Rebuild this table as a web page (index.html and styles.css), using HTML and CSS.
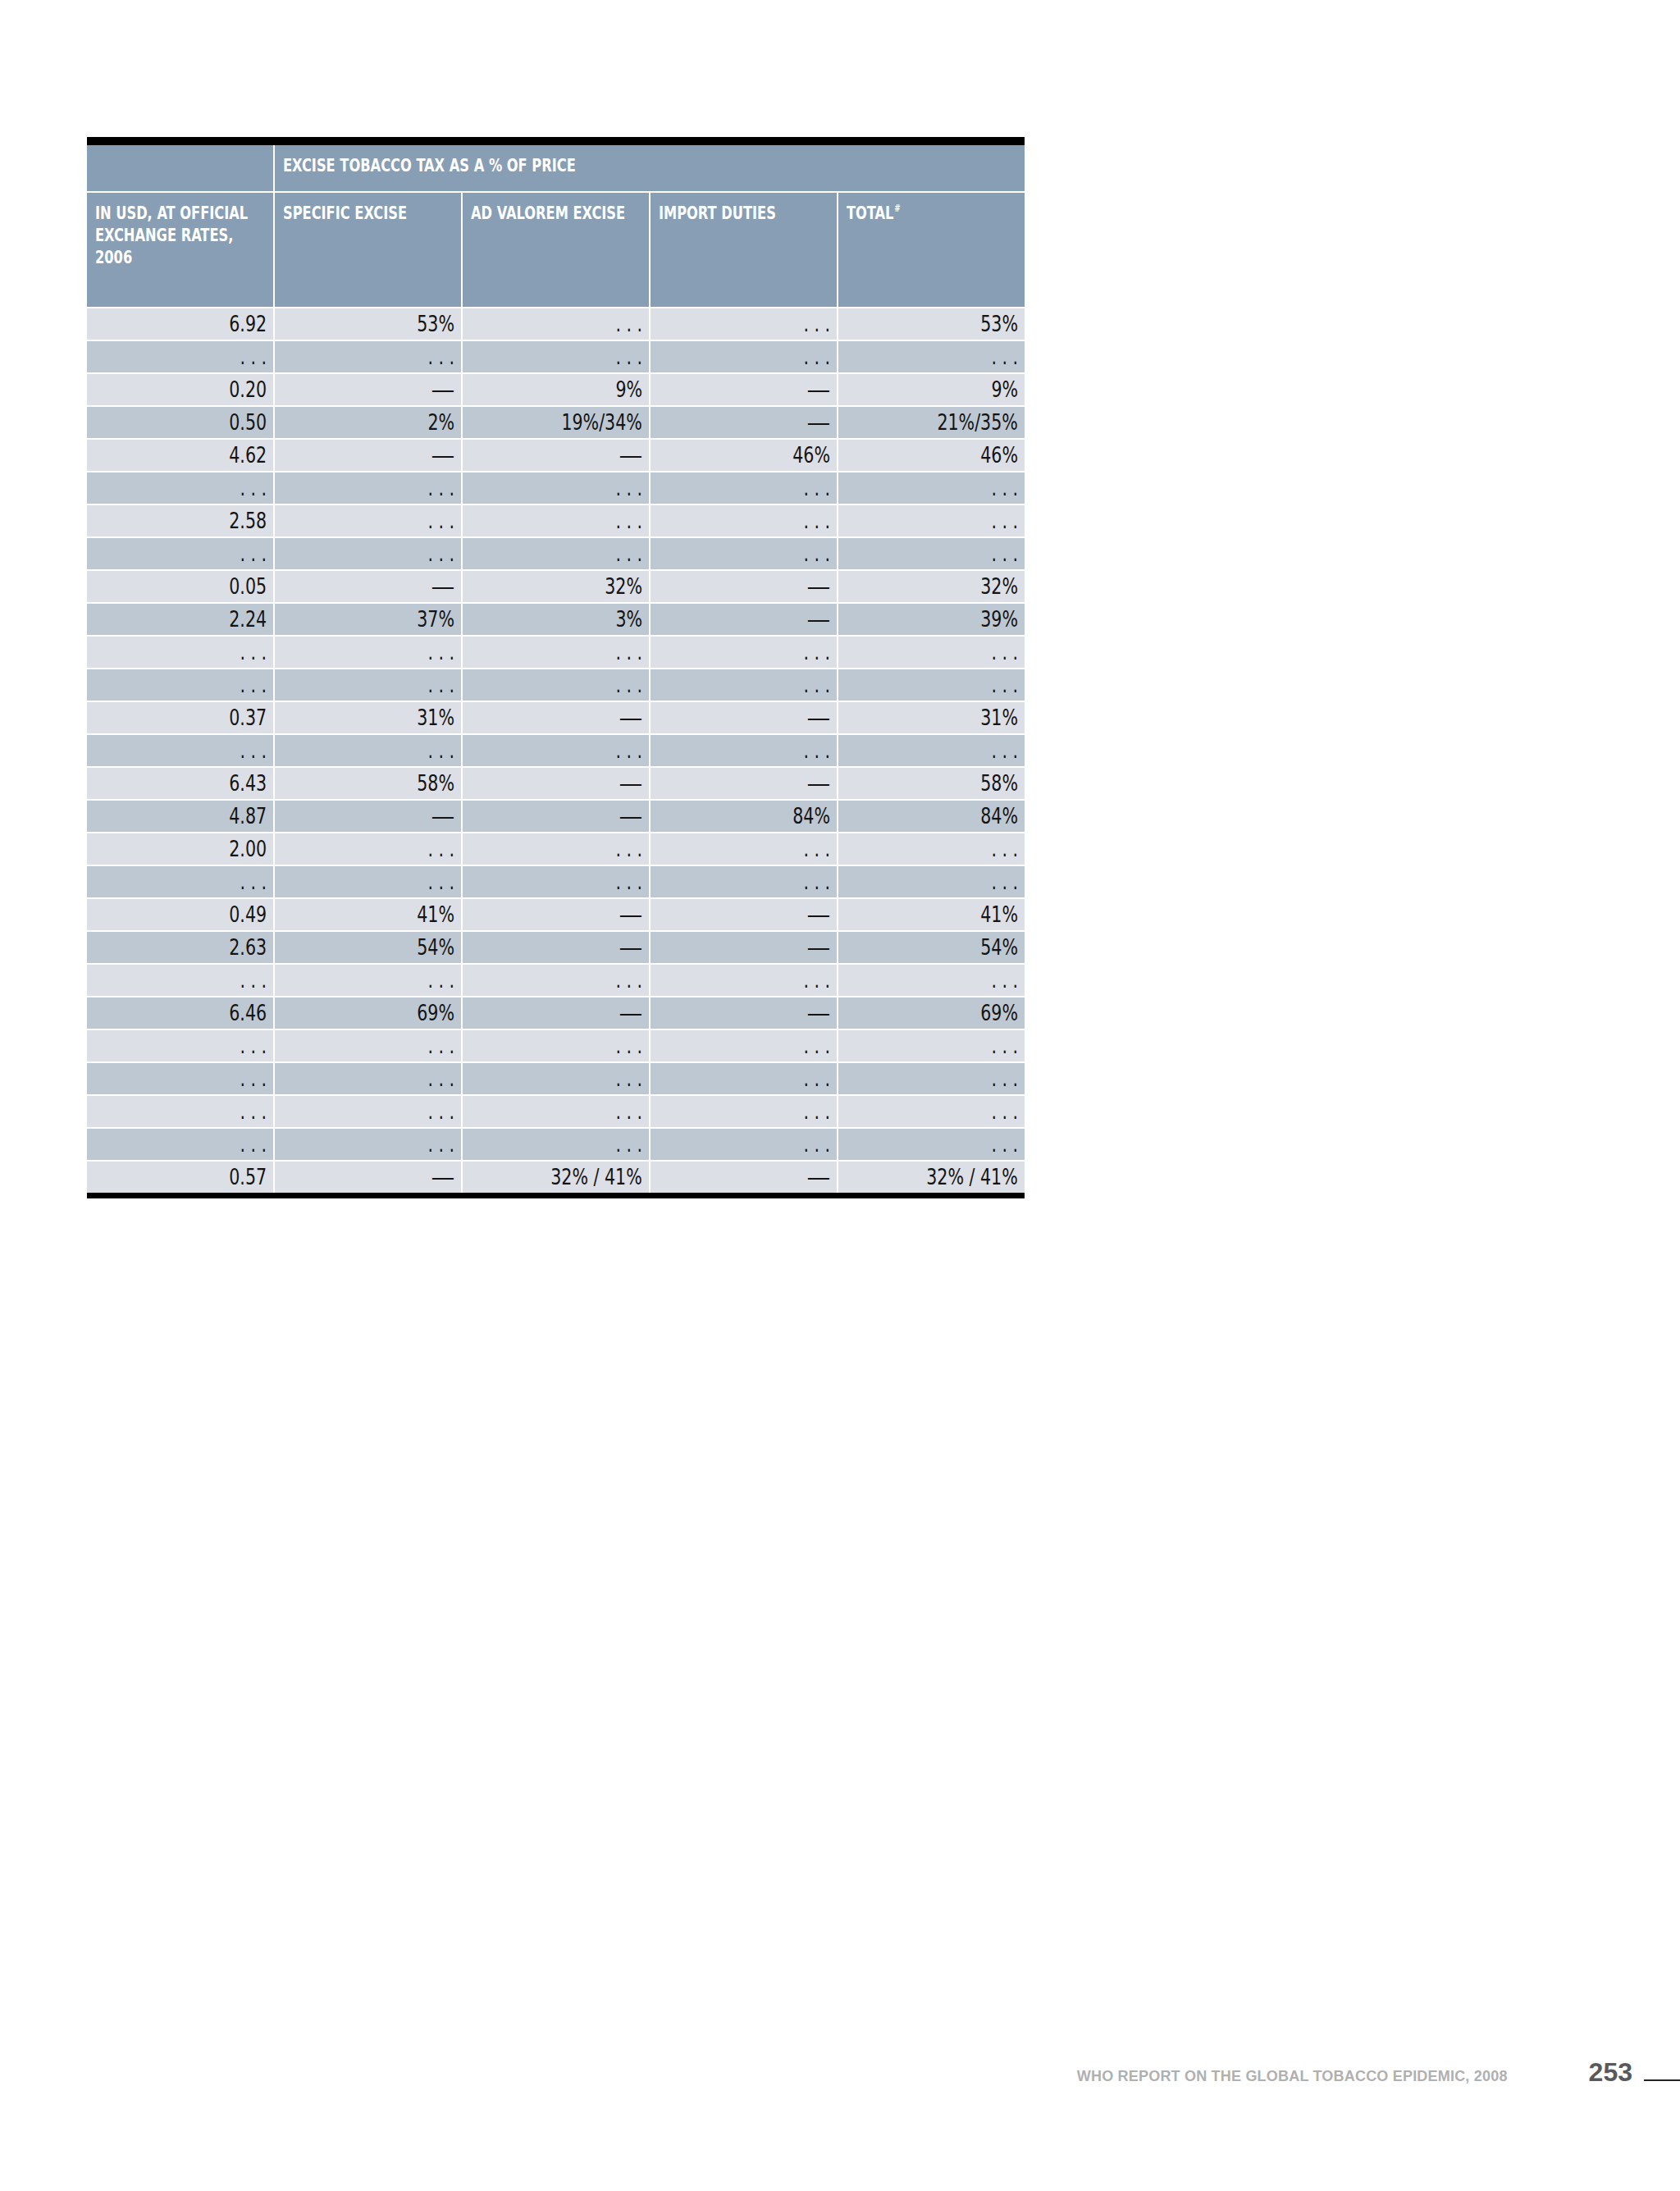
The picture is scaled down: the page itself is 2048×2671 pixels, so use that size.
FILE: index.html
```html
<!DOCTYPE html>
<html lang="en">
<head>
<meta charset="utf-8">
<title>Excise tobacco tax table</title>
<link rel="stylesheet" href="styles.css">
</head>
<body>
<div class="page">
  <div class="tbl">
    <div class="h h1"></div>
    <div class="h h1 span4"><span class="ht">EXCISE TOBACCO TAX AS A % OF PRICE</span></div>
    <div class="h h2"><span class="ht">IN USD, AT OFFICIAL<br>EXCHANGE RATES,<br>2006</span></div>
    <div class="h h2"><span class="ht">SPECIFIC EXCISE</span></div>
    <div class="h h2"><span class="ht">AD VALOREM EXCISE</span></div>
    <div class="h h2"><span class="ht">IMPORT DUTIES</span></div>
    <div class="h h2"><span class="ht">TOTAL<sup>#</sup></span></div>

    <div class="row"><div class="c"><span class="v">6.92</span></div><div class="c"><span class="v">53%</span></div><div class="c"><span class="v">. . .</span></div><div class="c"><span class="v">. . .</span></div><div class="c"><span class="v">53%</span></div></div>
    <div class="row alt"><div class="c"><span class="v">. . .</span></div><div class="c"><span class="v">. . .</span></div><div class="c"><span class="v">. . .</span></div><div class="c"><span class="v">. . .</span></div><div class="c"><span class="v">. . .</span></div></div>
    <div class="row"><div class="c"><span class="v">0.20</span></div><div class="c"><span class="v"><span class="dash">—</span></span></div><div class="c"><span class="v">9%</span></div><div class="c"><span class="v"><span class="dash">—</span></span></div><div class="c"><span class="v">9%</span></div></div>
    <div class="row alt"><div class="c"><span class="v">0.50</span></div><div class="c"><span class="v">2%</span></div><div class="c"><span class="v">19%/34%</span></div><div class="c"><span class="v"><span class="dash">—</span></span></div><div class="c"><span class="v">21%/35%</span></div></div>
    <div class="row"><div class="c"><span class="v">4.62</span></div><div class="c"><span class="v"><span class="dash">—</span></span></div><div class="c"><span class="v"><span class="dash">—</span></span></div><div class="c"><span class="v">46%</span></div><div class="c"><span class="v">46%</span></div></div>
    <div class="row alt"><div class="c"><span class="v">. . .</span></div><div class="c"><span class="v">. . .</span></div><div class="c"><span class="v">. . .</span></div><div class="c"><span class="v">. . .</span></div><div class="c"><span class="v">. . .</span></div></div>
    <div class="row"><div class="c"><span class="v">2.58</span></div><div class="c"><span class="v">. . .</span></div><div class="c"><span class="v">. . .</span></div><div class="c"><span class="v">. . .</span></div><div class="c"><span class="v">. . .</span></div></div>
    <div class="row alt"><div class="c"><span class="v">. . .</span></div><div class="c"><span class="v">. . .</span></div><div class="c"><span class="v">. . .</span></div><div class="c"><span class="v">. . .</span></div><div class="c"><span class="v">. . .</span></div></div>
    <div class="row"><div class="c"><span class="v">0.05</span></div><div class="c"><span class="v"><span class="dash">—</span></span></div><div class="c"><span class="v">32%</span></div><div class="c"><span class="v"><span class="dash">—</span></span></div><div class="c"><span class="v">32%</span></div></div>
    <div class="row alt"><div class="c"><span class="v">2.24</span></div><div class="c"><span class="v">37%</span></div><div class="c"><span class="v">3%</span></div><div class="c"><span class="v"><span class="dash">—</span></span></div><div class="c"><span class="v">39%</span></div></div>
    <div class="row"><div class="c"><span class="v">. . .</span></div><div class="c"><span class="v">. . .</span></div><div class="c"><span class="v">. . .</span></div><div class="c"><span class="v">. . .</span></div><div class="c"><span class="v">. . .</span></div></div>
    <div class="row alt"><div class="c"><span class="v">. . .</span></div><div class="c"><span class="v">. . .</span></div><div class="c"><span class="v">. . .</span></div><div class="c"><span class="v">. . .</span></div><div class="c"><span class="v">. . .</span></div></div>
    <div class="row"><div class="c"><span class="v">0.37</span></div><div class="c"><span class="v">31%</span></div><div class="c"><span class="v"><span class="dash">—</span></span></div><div class="c"><span class="v"><span class="dash">—</span></span></div><div class="c"><span class="v">31%</span></div></div>
    <div class="row alt"><div class="c"><span class="v">. . .</span></div><div class="c"><span class="v">. . .</span></div><div class="c"><span class="v">. . .</span></div><div class="c"><span class="v">. . .</span></div><div class="c"><span class="v">. . .</span></div></div>
    <div class="row"><div class="c"><span class="v">6.43</span></div><div class="c"><span class="v">58%</span></div><div class="c"><span class="v"><span class="dash">—</span></span></div><div class="c"><span class="v"><span class="dash">—</span></span></div><div class="c"><span class="v">58%</span></div></div>
    <div class="row alt"><div class="c"><span class="v">4.87</span></div><div class="c"><span class="v"><span class="dash">—</span></span></div><div class="c"><span class="v"><span class="dash">—</span></span></div><div class="c"><span class="v">84%</span></div><div class="c"><span class="v">84%</span></div></div>
    <div class="row"><div class="c"><span class="v">2.00</span></div><div class="c"><span class="v">. . .</span></div><div class="c"><span class="v">. . .</span></div><div class="c"><span class="v">. . .</span></div><div class="c"><span class="v">. . .</span></div></div>
    <div class="row alt"><div class="c"><span class="v">. . .</span></div><div class="c"><span class="v">. . .</span></div><div class="c"><span class="v">. . .</span></div><div class="c"><span class="v">. . .</span></div><div class="c"><span class="v">. . .</span></div></div>
    <div class="row"><div class="c"><span class="v">0.49</span></div><div class="c"><span class="v">41%</span></div><div class="c"><span class="v"><span class="dash">—</span></span></div><div class="c"><span class="v"><span class="dash">—</span></span></div><div class="c"><span class="v">41%</span></div></div>
    <div class="row alt"><div class="c"><span class="v">2.63</span></div><div class="c"><span class="v">54%</span></div><div class="c"><span class="v"><span class="dash">—</span></span></div><div class="c"><span class="v"><span class="dash">—</span></span></div><div class="c"><span class="v">54%</span></div></div>
    <div class="row"><div class="c"><span class="v">. . .</span></div><div class="c"><span class="v">. . .</span></div><div class="c"><span class="v">. . .</span></div><div class="c"><span class="v">. . .</span></div><div class="c"><span class="v">. . .</span></div></div>
    <div class="row alt"><div class="c"><span class="v">6.46</span></div><div class="c"><span class="v">69%</span></div><div class="c"><span class="v"><span class="dash">—</span></span></div><div class="c"><span class="v"><span class="dash">—</span></span></div><div class="c"><span class="v">69%</span></div></div>
    <div class="row"><div class="c"><span class="v">. . .</span></div><div class="c"><span class="v">. . .</span></div><div class="c"><span class="v">. . .</span></div><div class="c"><span class="v">. . .</span></div><div class="c"><span class="v">. . .</span></div></div>
    <div class="row alt"><div class="c"><span class="v">. . .</span></div><div class="c"><span class="v">. . .</span></div><div class="c"><span class="v">. . .</span></div><div class="c"><span class="v">. . .</span></div><div class="c"><span class="v">. . .</span></div></div>
    <div class="row"><div class="c"><span class="v">. . .</span></div><div class="c"><span class="v">. . .</span></div><div class="c"><span class="v">. . .</span></div><div class="c"><span class="v">. . .</span></div><div class="c"><span class="v">. . .</span></div></div>
    <div class="row alt"><div class="c"><span class="v">. . .</span></div><div class="c"><span class="v">. . .</span></div><div class="c"><span class="v">. . .</span></div><div class="c"><span class="v">. . .</span></div><div class="c"><span class="v">. . .</span></div></div>
    <div class="row"><div class="c"><span class="v">0.57</span></div><div class="c"><span class="v"><span class="dash">—</span></span></div><div class="c"><span class="v">32% / 41%</span></div><div class="c"><span class="v"><span class="dash">—</span></span></div><div class="c"><span class="v">32% / 41%</span></div></div>
  </div>

  <div class="footer">
    <span class="title">WHO REPORT ON THE GLOBAL TOBACCO EPIDEMIC, 2008</span>
    <span class="pnum">253</span>
    <div class="rule"></div>
  </div>
</div>
</body>
</html>
```

FILE: styles.css
```css
html, body {
  margin: 0;
  padding: 0;
  background: #ffffff;
}

.page {
  width: 2048px;
  padding-top: 167px;
}

.tbl {
  margin-left: 106px;
  width: 1143px;
  display: grid;
  grid-template-columns: repeat(5, 227px);
  grid-template-rows: 56px 139px repeat(27, 38px);
  column-gap: 2px;
  row-gap: 2px;
  background: #ffffff;
  border-top: 10px solid #000000;
  border-bottom: 7px solid #000000;
  font-family: "DejaVu Sans Condensed", "Liberation Sans", sans-serif;
}

.h {
  background: #889eb4;
  color: #ffffff;
  font-weight: bold;
  font-size: 22px;
  line-height: 27px;
  padding: 11px 10px 0 10px;
  white-space: nowrap;
  overflow: hidden;
}

.ht {
  display: inline-block;
  transform: scaleX(0.82);
  transform-origin: left top;
}

.span4 {
  grid-column: span 4;
}

.h sup {
  font-size: 12px;
  line-height: 0;
  vertical-align: 9px;
  margin-left: 1px;
}

.row {
  display: contents;
}

.c {
  background: #dcdfe5;
  color: #141414;
  font-size: 26px;
  line-height: 38px;
  text-align: right;
  padding-right: 8px;
  white-space: nowrap;
}

.row.alt .c {
  background: #bec8d3;
}

.v {
  display: inline-block;
  transform: scaleX(0.88);
  transform-origin: right center;
}

.dash {
  display: inline-block;
  transform: scaleX(1.4);
  transform-origin: right center;
}

.footer {
  margin-top: 1049px;
  display: flex;
  align-items: baseline;
  justify-content: flex-end;
  line-height: 32px;
}

.title {
  font-family: "Liberation Sans", sans-serif;
  font-weight: bold;
  font-size: 18px;
  letter-spacing: 0.2px;
  color: #b0b0b0;
  margin-right: 99px;
}

.pnum {
  font-family: "Liberation Sans", sans-serif;
  font-weight: bold;
  font-size: 32px;
  color: #58595b;
  margin-right: 14px;
}

.rule {
  width: 44px;
  height: 0;
  border-bottom: 2px solid #222222;
}
```
